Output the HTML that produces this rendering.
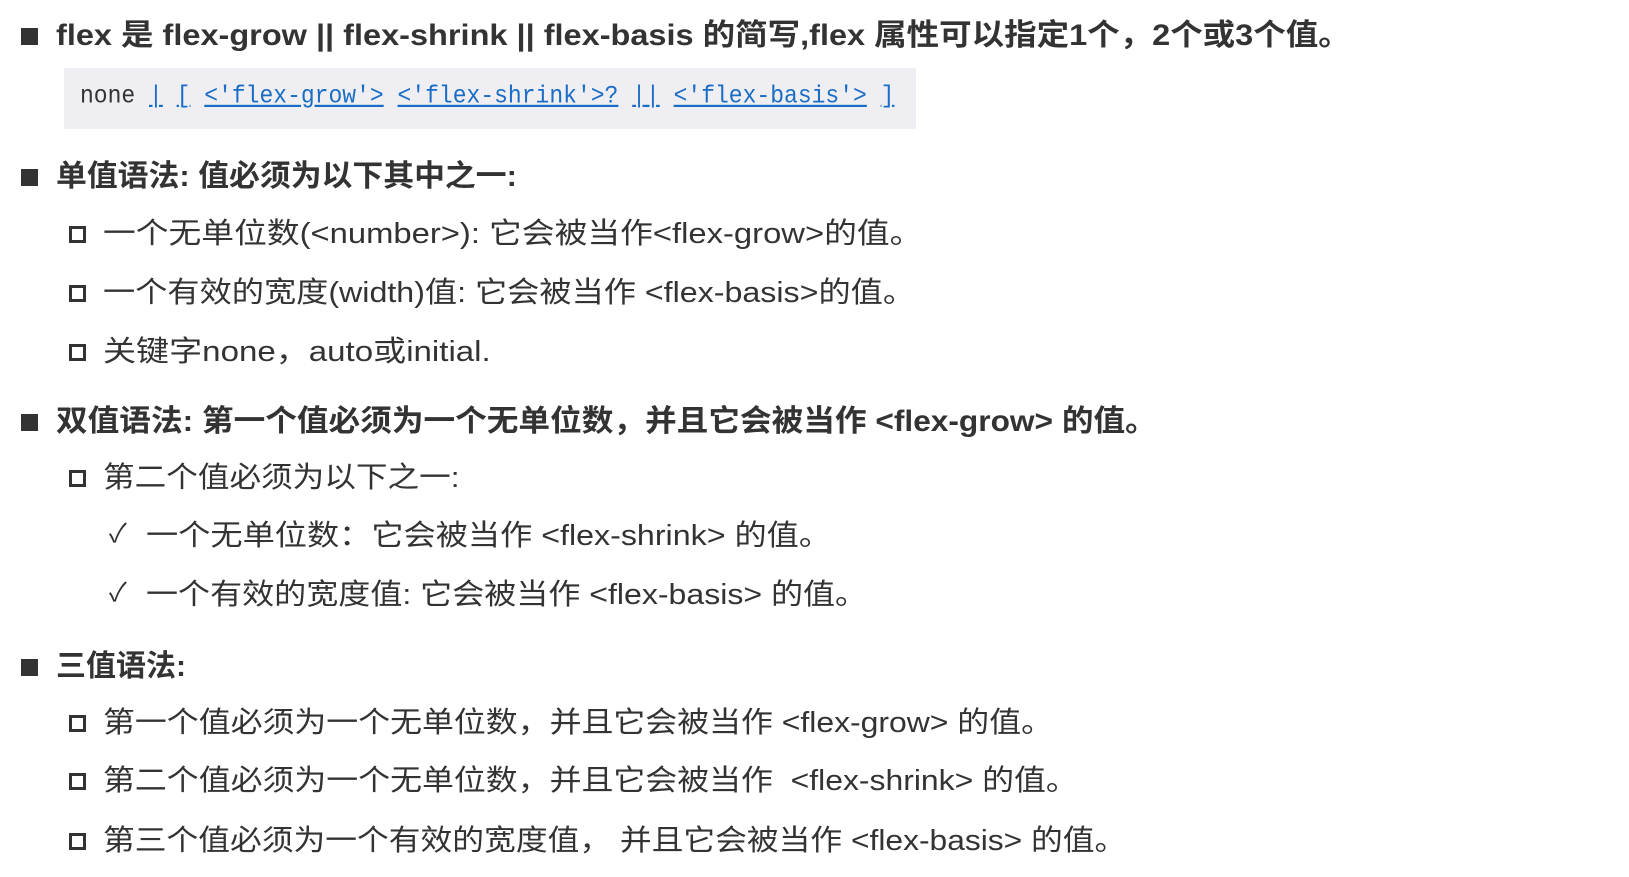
<!DOCTYPE html>
<html><head><meta charset="utf-8"><style>
body{margin:0;width:1629px;height:877px;background:#fff;font-family:"Liberation Sans","Noto Sans CJK SC",sans-serif;color:#333;position:relative;overflow:hidden}
.l{position:absolute;white-space:nowrap;line-height:1}
.l span{display:inline-block;transform-origin:0 50%}
.h{font-weight:bold;font-size:30px;left:56px}
.h:before{content:"";position:absolute;left:-35px;top:7px;width:17px;height:17px;background:#333}
.i{font-size:29px;left:103px}
.i:before{content:"";position:absolute;left:-34px;top:6px;width:17px;height:17px;border:3.5px solid #333;box-sizing:border-box}
.c{font-size:29px;left:146px}
.c:before{content:"✓";position:absolute;left:-37px;top:-2px;font-size:26px}
.code{position:absolute;left:64px;top:68px;width:852px;height:61px;background:#eeeef3}
.code span.t{position:absolute;left:16px;top:15px;font-family:"Liberation Mono",monospace;font-size:23px;color:#333;white-space:pre;transform:scaleY(1.1)}
.code a{color:#1a6dc5;text-decoration:underline}
</style></head><body>
<div class="l h" style="top:21px"><span style="transform:scaleX(1.083)">flex 是 flex-grow || flex-shrink || flex-basis 的简写,flex 属性可以指定1个，2个或3个值。</span></div>
<div class="code"><span class="t">none <a>|</a> <a>[</a> <a>&lt;'flex-grow'&gt;</a> <a>&lt;'flex-shrink'&gt;?</a> <a>||</a> <a>&lt;'flex-basis'&gt;</a> <a>]</a></span></div>
<div class="l h" style="top:162px"><span style="transform:scaleX(1.028)">单值语法: 值必须为以下其中之一:</span></div>
<div class="l i" style="top:220px"><span style="transform:scaleX(1.13)">一个无单位数(&lt;number&gt;): 它会被当作&lt;flex-grow&gt;的值。</span></div>
<div class="l i" style="top:279px"><span style="transform:scaleX(1.11)">一个有效的宽度(width)值: 它会被当作 &lt;flex-basis&gt;的值。</span></div>
<div class="l i" style="top:338px"><span style="transform:scaleX(1.14)">关键字none，auto或initial.</span></div>
<div class="l h" style="top:407px"><span style="transform:scaleX(1.055)">双值语法: 第一个值必须为一个无单位数，并且它会被当作 &lt;flex-grow&gt; 的值。</span></div>
<div class="l i" style="top:464px"><span style="transform:scaleX(1.09)">第二个值必须为以下之一:</span></div>
<div class="l c" style="top:522px"><span style="transform:scaleX(1.11)">一个无单位数：它会被当作 &lt;flex-shrink&gt; 的值。</span></div>
<div class="l c" style="top:581px"><span style="transform:scaleX(1.105)">一个有效的宽度值: 它会被当作 &lt;flex-basis&gt; 的值。</span></div>
<div class="l h" style="top:652px"><span>三值语法:</span></div>
<div class="l i" style="top:709px"><span style="transform:scaleX(1.10)">第一个值必须为一个无单位数，并且它会被当作 &lt;flex-grow&gt; 的值。</span></div>
<div class="l i" style="top:767px"><span style="transform:scaleX(1.10)">第二个值必须为一个无单位数，并且它会被当作 &nbsp;&lt;flex-shrink&gt; 的值。</span></div>
<div class="l i" style="top:827px"><span style="transform:scaleX(1.095)">第三个值必须为一个有效的宽度值， 并且它会被当作 &lt;flex-basis&gt; 的值。</span></div>
</body></html>
